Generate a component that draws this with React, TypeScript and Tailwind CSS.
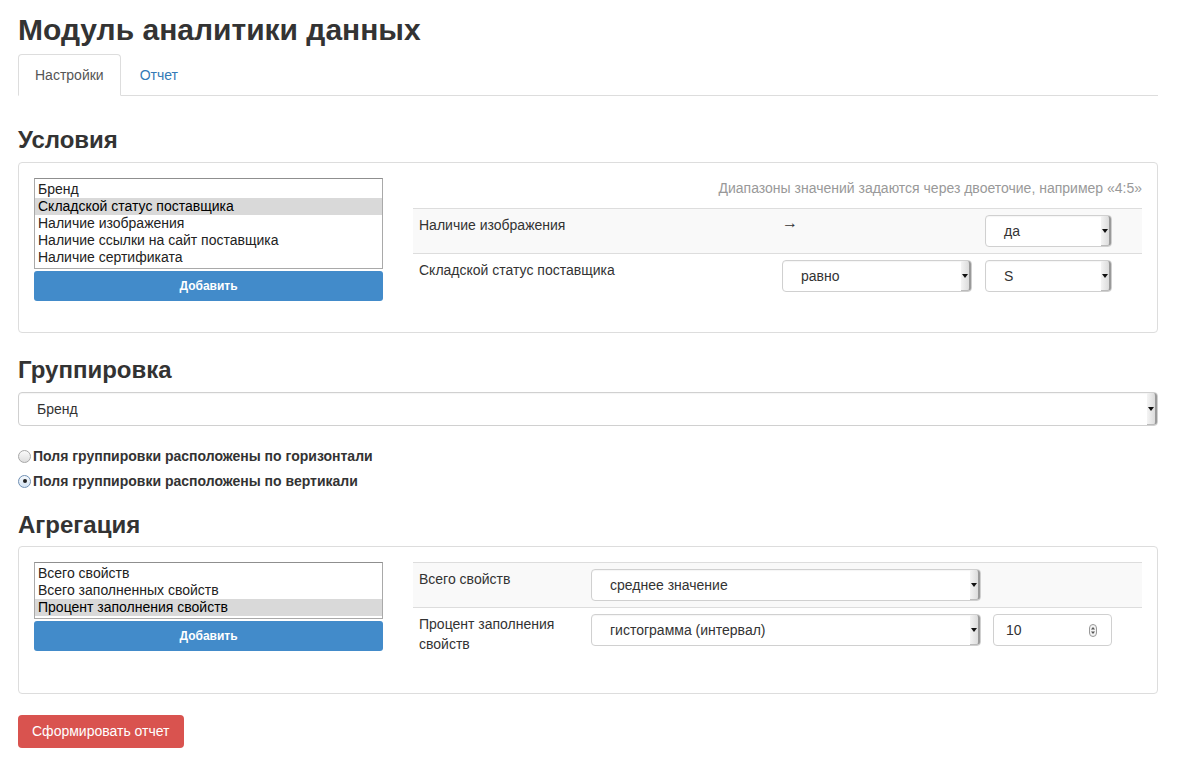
import React from "react";

const font = { fontFamily: '"Liberation Sans", Arial, sans-serif' };

function SelectBox({ value, className = "" }: { value: string; className?: string }) {
  return (
    <div
      className={`flex h-[32px] items-stretch rounded-[4px] border border-[#d0d0d0] bg-white shadow-[inset_0_1px_1px_rgba(0,0,0,0.04)] ${className}`}
    >
      <div className="flex flex-1 items-center pl-[18px] text-[14px] text-[#333]">{value}</div>
      <div className="flex w-[10px] items-center justify-center rounded-r-[3px] border-r-2 border-b border-r-[#9a9a9a] border-b-[#bbb] bg-gradient-to-r from-[#f4f4f4] to-[#dcdcdc]">
        <span className="block h-0 w-0 border-x-[3px] border-t-[4px] border-x-transparent border-t-[#111]" />
      </div>
    </div>
  );
}

function NumberBox({ value }: { value: string }) {
  return (
    <div className="flex h-[32px] w-[119px] items-center rounded-[4px] border border-[#d0d0d0] bg-white pl-[12px] pr-[14px] text-[14px] text-[#333]">
      <span className="flex-1">{value}</span>
      <svg width="8" height="13" viewBox="0 0 8 13">
        <rect x="0.5" y="0.5" width="7" height="12" rx="3.5" fill="#f4f4f4" stroke="#999" />
        <path d="M4 3 L6 5.5 H2 Z" fill="#555" />
        <path d="M4 10 L6 7.5 H2 Z" fill="#555" />
      </svg>
    </div>
  );
}

function ListBox({ items, selected }: { items: string[]; selected: number }) {
  return (
    <div className="border border-[#a9a9a9] border-t-[#8f8f8f] bg-white py-[2px]">
      {items.map((item, i) => (
        <div
          key={item}
          className={`h-[17px] pl-[3px] text-[14px] leading-[17px] text-[#222] ${i === selected ? "bg-[#d9d9d9] text-black" : ""}`}
        >
          {item}
        </div>
      ))}
    </div>
  );
}

function AddButton() {
  return (
    <button className="mt-[2px] block h-[30px] w-full rounded-[3px] bg-[#428bca] text-[12px] font-bold text-white">
      Добавить
    </button>
  );
}

function Radio({ checked, label }: { checked?: boolean; label: string }) {
  return (
    <label className="flex h-[20px] items-center gap-[2px] text-[14px] font-bold text-[#333]">
      {checked ? (
        <span className="flex h-[13px] w-[13px] items-center justify-center rounded-full border border-[#6f8fb3] bg-gradient-to-b from-[#f6f9fc] to-[#d3e2f2]">
          <span className="h-[4px] w-[4px] rounded-full bg-[#222]" />
        </span>
      ) : (
        <span className="h-[13px] w-[13px] rounded-full border border-[#a7a7a7] bg-gradient-to-b from-[#fafafa] to-[#dedede]" />
      )}
      {label}
    </label>
  );
}

export default function App() {
  return (
    <div className="min-h-[768px] bg-white px-[18px] pt-[13px] text-[#333]" style={font}>
      <div className="w-[1140px]">
        <h1 className="text-[30px] font-bold leading-[33px] text-[#333]">Модуль аналитики данных</h1>

        <ul className="mt-[8px] flex border-b border-[#ddd] text-[14px]">
          <li className="-mb-px mr-[2px]">
            <span className="block rounded-t-[4px] border border-[#ddd] border-b-white bg-white px-[16px] py-[10px] leading-[20px] text-[#555]">
              Настройки
            </span>
          </li>
          <li className="-mb-px">
            <span className="block border border-transparent px-[16px] py-[10px] leading-[20px] text-[#337ab7]">Отчет</span>
          </li>
        </ul>

        <h2 className="mt-[31px] text-[24px] font-bold leading-[26px] text-[#333]">Условия</h2>
        <div className="mt-[9px] flex gap-[30px] rounded-[4px] border border-[#ddd] p-[15px] pb-[14px]">
          <div className="w-[349px] pb-[15px]">
            <ListBox
              items={[
                "Бренд",
                "Складской статус поставщика",
                "Наличие изображения",
                "Наличие ссылки на сайт поставщика",
                "Наличие сертификата",
              ]}
              selected={1}
            />
            <AddButton />
          </div>
          <div className="flex-1">
            <p className="text-right text-[14px] leading-[20px] text-[#999]">
              Диапазоны значений задаются через двоеточие, например «4:5»
            </p>
            <div className="mb-[20px] mt-[10px] text-[14px]">
              <div className="flex border-t border-[#ddd] bg-[#f9f9f9]">
                <div className="w-[361px] px-[6px] py-[6px] leading-[20px]">Наличие изображения</div>
                <div className="w-[203px] px-[8px] pt-[4px] text-[16px] leading-[20px]">→</div>
                <div className="flex-1 px-[8px] py-[6px]">
                  <SelectBox value="да" className="w-[127px]" />
                </div>
              </div>
              <div className="flex border-t border-[#ddd]">
                <div className="w-[361px] px-[6px] py-[6px] leading-[20px]">Складской статус поставщика</div>
                <div className="w-[203px] px-[8px] py-[6px]">
                  <SelectBox value="равно" className="w-[190px]" />
                </div>
                <div className="flex-1 px-[8px] py-[6px]">
                  <SelectBox value="S" className="w-[127px]" />
                </div>
              </div>
            </div>
          </div>
        </div>

        <h2 className="mt-[24px] text-[24px] font-bold leading-[26px] text-[#333]">Группировка</h2>
        <SelectBox value="Бренд" className="mt-[9px] h-[34px]" />
        <div className="mt-[20px] flex flex-col gap-[5px]">
          <Radio label="Поля группировки расположены по горизонтали" />
          <Radio checked label="Поля группировки расположены по вертикали" />
        </div>

        <h2 className="mt-[21px] text-[24px] font-bold leading-[26px] text-[#333]">Агрегация</h2>
        <div className="mt-[8px] flex gap-[30px] rounded-[4px] border border-[#ddd] p-[15px]">
          <div className="w-[349px] pb-[15px]">
            <ListBox items={["Всего свойств", "Всего заполненных свойств", "Процент заполнения свойств"]} selected={2} />
            <AddButton />
          </div>
          <div className="flex-1">
            <div className="mb-[18px] text-[14px]">
              <div className="flex border-t border-[#ddd] bg-[#f9f9f9]">
                <div className="w-[170px] px-[6px] py-[6px] leading-[20px]">Всего свойств</div>
                <div className="w-[402px] px-[8px] py-[6px]">
                  <SelectBox value="среднее значение" className="w-[390px]" />
                </div>
                <div className="flex-1" />
              </div>
              <div className="flex border-t border-[#ddd]">
                <div className="w-[170px] px-[6px] py-[6px] leading-[20px]">Процент заполнения свойств</div>
                <div className="w-[402px] px-[8px] py-[6px]">
                  <SelectBox value="гистограмма (интервал)" className="w-[390px]" />
                </div>
                <div className="flex-1 px-[8px] py-[6px]">
                  <NumberBox value="10" />
                </div>
              </div>
            </div>
          </div>
        </div>

        <button className="mt-[21px] h-[33px] rounded-[4px] bg-[#d9534f] px-[14px] text-[14px] text-white">
          Сформировать отчет
        </button>
      </div>
    </div>
  );
}
